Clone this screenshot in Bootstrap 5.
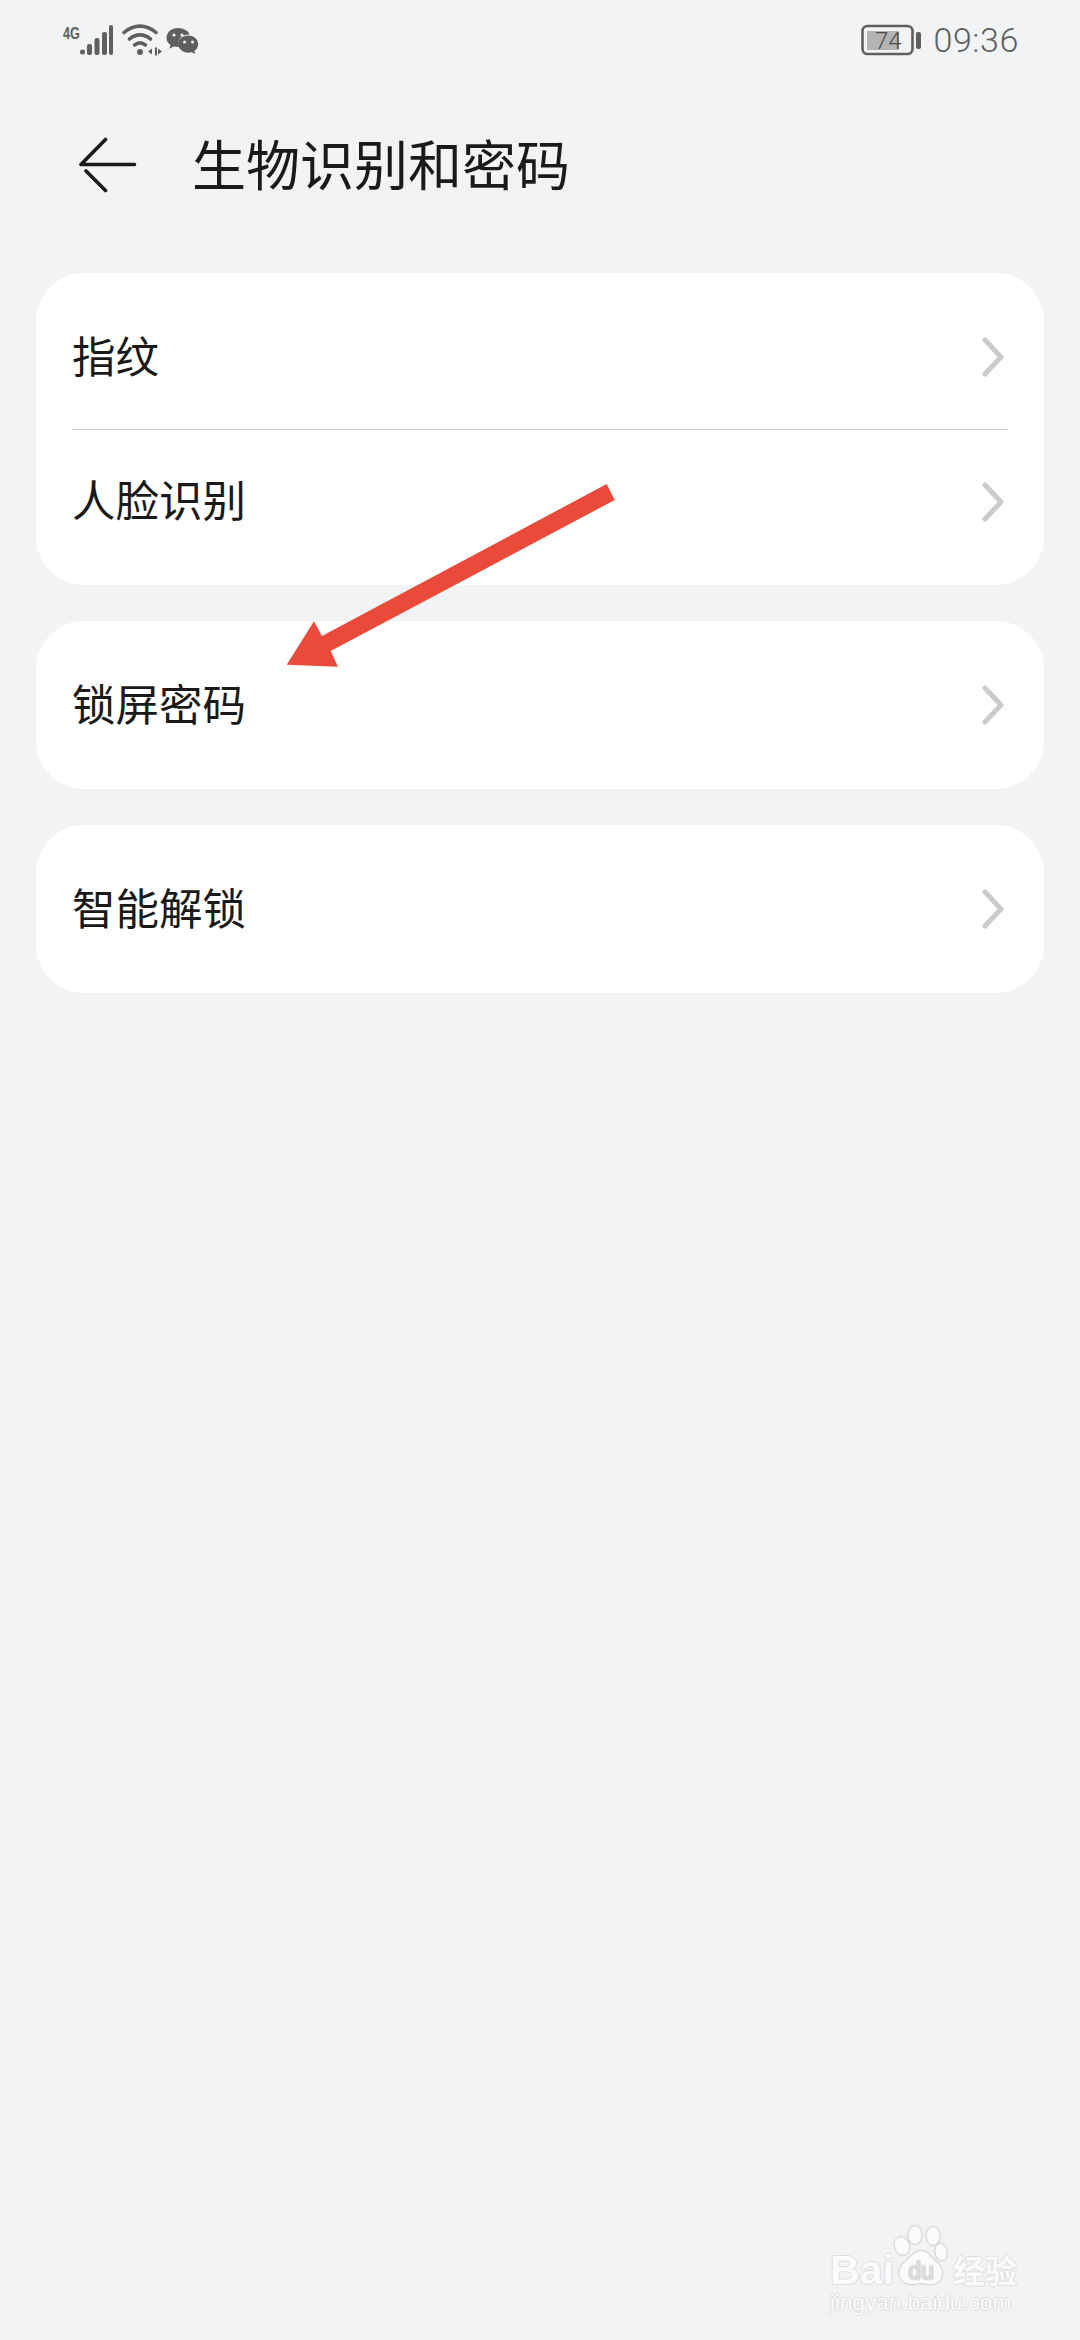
<!DOCTYPE html>
<html lang="zh-CN">
<head>
  <meta charset="UTF-8" />
  <meta name="viewport" content="width=device-width, initial-scale=1.0"/>
  <title>生物识别和密码</title>
  <link href="https://cdn.jsdelivr.net/npm/bootstrap@5.3.2/dist/css/bootstrap.min.css" rel="stylesheet">
  <style>
    html, body {
      height: 2340px;
      overflow: hidden;
    }
    body {
      position: relative;
      background-color: #f1f3f5;
      font-family: "Noto Sans CJK SC", "Noto Sans", sans-serif;
      color: #1a1a1a;
    }
    .status-bar {
      height: 80px;
      padding: 0 61px 0 63px;
    }
    .status-time {
      font-family: "Roboto", sans-serif;
      font-weight: 300;
      font-size: 34px;
      line-height: 1;
      color: #5f5f5f;
      letter-spacing: .6px;
    }
    .page-head {
      height: 172px;
      padding-left: 79px;
      gap: 55px;
    }
    .back-icon {
      margin-bottom: 2px;
    }
    .page-title {
      font-size: 54px;
      font-weight: 400;
      line-height: 1;
      margin: 0 0 6px;
    }
    .group-stack {
      margin: 21px 36px 0;
      gap: 36px;
    }
    .group-box {
      background: #fff;
      border-radius: 48px;
      padding: 12px 36px;
    }
    .group-row {
      height: 144px;
      font-size: 43.5px;
      line-height: 1;
      padding-right: 4px;
    }
    .group-row.row-short {
      height: 143px;
    }
    .group-row span {
      margin-bottom: 5px;
    }
    .group-line {
      height: 1px;
      background: #cfcfcf;
    }
    .pointer-arrow {
      position: absolute;
      left: 0;
      top: 0;
      pointer-events: none;
    }
    .wm-box {
      position: absolute;
      left: 830px;
      top: 2225px;
      width: 200px;
      color: #fbfbfb;
      text-shadow: 1px 0 0 #dedede, -1px 0 0 #dedede, 0 1px 0 #dedede, 0 -1px 0 #dedede;
    }
    .wm-bai {
      font-family: "Liberation Sans", sans-serif;
      font-weight: 700;
      font-size: 41px;
      line-height: 30px;
      width: 63px;
    }
    .wm-cn {
      font-size: 32px;
      line-height: 1;
      font-weight: 700;
      white-space: nowrap;
      margin-left: 6px;
    }
    .wm-url {
      font-family: "Liberation Sans", sans-serif;
      font-size: 22.5px;
      line-height: 1;
      margin-top: 7px;
      white-space: nowrap;
    }
  </style>
</head>
<body>
  <div class="status-bar d-flex align-items-center justify-content-between">
    <svg width="136" height="32" viewBox="63 24 136 32" fill="#5f5f5f">
      <text x="63" y="39" font-family="Liberation Sans" font-weight="700" font-size="17" textLength="17" lengthAdjust="spacingAndGlyphs">4G</text>
      <circle cx="82.500" cy="52" r="2.500"/>
      <rect x="87" y="44" width="5" height="11" rx="2"/>
      <rect x="94.500" y="38" width="5" height="17" rx="2"/>
      <rect x="102" y="32" width="5" height="23" rx="2"/>
      <rect x="109" y="25" width="4" height="30" rx="2"/>
      <g fill="none" stroke="#5f5f5f" stroke-width="3.600" stroke-linecap="round">
        <path d="M124 32.500c10-8.500 22-8.500 32 0"/>
        <path d="M129.500 39c6.500-5.500 14.500-5.500 21 0"/>
        <path d="M134.500 45c3.500-2.700 7.500-2.700 11 0"/>
      </g>
      <circle cx="140" cy="52" r="3"/>
      <path d="M152 48.500v6l-4-3zM155 47.500h2v8h-2zM158 48.500l4 3-4 3z"/>
      <path d="M178 28c-6.600 0-11.500 4.300-11.500 9.700 0 3 1.500 5.500 4 7.300l-1 3.700 4.300-2.300c1.300.3 2.600.5 4 .5l1 0c-.4-1-.6-2-.6-3.100 0-5.200 4.700-9.200 10.600-9.200l.8 0C188.500 31.100 183.800 28 178 28z"/>
      <path d="M188.500 35.500c-5.900 0-10.500 3.900-10.500 8.600 0 4.800 4.600 8.600 10.500 8.600 1.100 0 2.200-.2 3.200-.5l3.600 1.900-.9-3.100c2.400-1.600 3.800-4 3.800-6.900 0-4.700-4.600-8.600-9.700-8.600z"/>
      <circle cx="174" cy="35" r="1.600" fill="#f1f3f5"/>
      <circle cx="182" cy="35" r="1.600" fill="#f1f3f5"/>
      <circle cx="184.500" cy="42" r="1.500" fill="#f1f3f5"/>
      <circle cx="192.500" cy="42" r="1.500" fill="#f1f3f5"/>
    </svg>
    <div class="d-flex align-items-center" style="gap:12px">
      <svg width="60" height="32" viewBox="861 24 60 32">
        <rect x="862.500" y="26" width="50" height="28" rx="5" fill="none" stroke="#5f5f5f" stroke-width="2.600"/>
        <rect x="867" y="31" width="32" height="19" fill="#b4b4b4"/>
        <rect x="916" y="32" width="5" height="17" rx="2" fill="#5f5f5f"/>
        <text x="875" y="49" font-family="Roboto" font-weight="300" font-size="24" fill="#4a4a4a">74</text>
      </svg>
      <span class="status-time">09:36</span>
    </div>
  </div>

  <div class="page-head d-flex align-items-center">
    <svg class="back-icon" width="58" height="56" viewBox="74 137 58 56" fill="none" stroke="#1a1a1a" stroke-width="3.600" stroke-linecap="round" stroke-linejoin="round">
      <path d="M100.500 139.500L76 164.500H129.500"/>
      <path d="M81 171L100.500 190.500"/>
    </svg>
    <h1 class="page-title">生物识别和密码</h1>
  </div>

  <div class="group-stack d-flex flex-column">
    <div class="group-box">
      <div class="group-row d-flex align-items-center justify-content-between">
        <span>指纹</span>
        <svg width="22" height="40" viewBox="0 0 22 40" fill="none" stroke="#cbcbcb" stroke-width="5" stroke-linecap="round" stroke-linejoin="round"><path d="M3 3L19 20L3 37"/></svg>
      </div>
      <div class="group-line"></div>
      <div class="group-row row-short d-flex align-items-center justify-content-between">
        <span>人脸识别</span>
        <svg width="22" height="40" viewBox="0 0 22 40" fill="none" stroke="#cbcbcb" stroke-width="5" stroke-linecap="round" stroke-linejoin="round"><path d="M3 3L19 20L3 37"/></svg>
      </div>
    </div>
    <div class="group-box">
      <div class="group-row d-flex align-items-center justify-content-between">
        <span>锁屏密码</span>
        <svg width="22" height="40" viewBox="0 0 22 40" fill="none" stroke="#cbcbcb" stroke-width="5" stroke-linecap="round" stroke-linejoin="round"><path d="M3 3L19 20L3 37"/></svg>
      </div>
    </div>
    <div class="group-box">
      <div class="group-row d-flex align-items-center justify-content-between">
        <span>智能解锁</span>
        <svg width="22" height="40" viewBox="0 0 22 40" fill="none" stroke="#cbcbcb" stroke-width="5" stroke-linecap="round" stroke-linejoin="round"><path d="M3 3L19 20L3 37"/></svg>
      </div>
    </div>
  </div>

  <svg class="pointer-arrow" width="1080" height="800" viewBox="0 0 1080 800">
    <polygon points="606.700,484 614.700,500 330.700,651 338,666.700 286.700,664.700 314,621.300 322,636" fill="#ea4a39"/>
  </svg>

  <div class="wm-box">
    <div class="d-flex align-items-end">
      <span class="wm-bai">Bai</span>
      <svg width="54" height="60" viewBox="0 0 54 60" style="filter:drop-shadow(0 0 1px rgba(0,0,0,.35))">
        <g fill="#fbfbfb">
          <ellipse cx="9" cy="21" rx="7" ry="9" transform="rotate(-20 9 21)"/>
          <ellipse cx="22" cy="10" rx="6.500" ry="9"/>
          <ellipse cx="40" cy="11" rx="6.500" ry="9"/>
          <ellipse cx="48" cy="27" rx="5.500" ry="8.500" transform="rotate(-10 48 27)"/>
          <path d="M28 26c7 0 10 7 16 12 8 7 6 19-4 21-5 1-8-1-12-1s-7 2-12 1C6 57 3 45 11 38c6-5 10-12 17-12z"/>
        </g>
        <text x="28" y="54" text-anchor="middle" font-family="Liberation Sans" font-size="23" fill="#f1f3f5" stroke="#d4d4d4" stroke-width=".6">du</text>
      </svg>
      <span class="wm-cn">经验</span>
    </div>
    <div class="wm-url">jingyan.baidu.com</div>
  </div>

  <script src="https://cdn.jsdelivr.net/npm/bootstrap@5.3.2/dist/js/bootstrap.bundle.min.js"></script>
</body>
</html>
